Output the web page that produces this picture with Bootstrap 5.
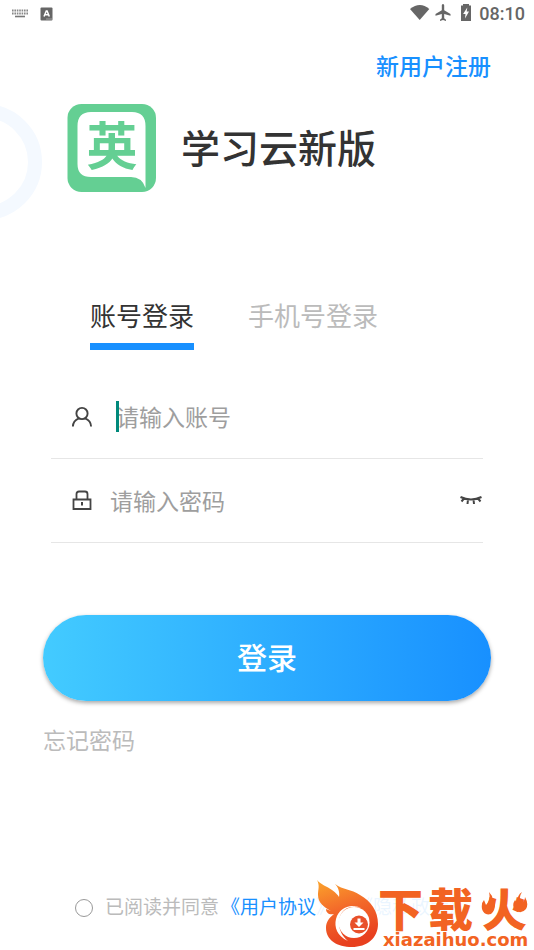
<!DOCTYPE html>
<html lang="zh-CN">
<head>
<meta charset="utf-8">
<meta name="viewport" content="width=device-width, initial-scale=1">
<title>学习云新版</title>
<link href="https://cdn.jsdelivr.net/npm/bootstrap@5.3.0/dist/css/bootstrap.min.css" rel="stylesheet">
<style>
body{font-family:Roboto,"Noto Sans CJK SC",sans-serif;background:#fff;color:#333}
a{text-decoration:none;color:#1890ff}
.screen{min-height:100vh;overflow:hidden}
.status{height:28px;padding:0 9px 0 12px;color:#666;font-size:18px;line-height:28px;font-weight:500}
.status-icons{padding-bottom:2px;margin-right:4px}
.gutter{padding-left:43px;padding-right:43px}
.register{font-size:23px;line-height:32px;font-weight:500;margin-top:24px}
.ring{position:absolute;left:-74px;top:104px;width:116px;height:116px;border:14px solid #f4f9ff;border-radius:50%}
.brand{padding:0 67px;margin-top:20px;gap:24px}
.brand h1{font-size:39px;line-height:48px;font-weight:500;padding-top:3px}
.login-tabs{padding:0 90px;margin-top:107px;gap:54px}
.login-tabs button{background:none;border:0;border-bottom:7px solid transparent;padding:0 0 7px;font-size:26px;line-height:37px;color:#bbb}
.login-tabs button.active{color:#333;border-color:#1890ff}
.fields{padding:0 51px;margin-top:25px}
.field-row{height:84px;border-bottom:1px solid #e6e6e6;padding-left:20px}
.field-row input{border:0;outline:0;padding:4px 0 0;font-size:23px;line-height:34px;background:none;min-width:0;color:#333}
.field-row input::placeholder{color:#9e9e9e;opacity:1}
.field-label{width:39px;line-height:0}
.field-label.wide{width:45px}
.caret{position:absolute;left:0;top:3px;width:3px;height:31px;background:#00897b}
.eye{border:0;background:none;padding:0;line-height:0}
.login-btn{height:86px;margin-top:72px;padding-top:2px;border:0;border-radius:43px;background:linear-gradient(90deg,#43cbff,#1890ff);box-shadow:0 2px 4px rgba(0,0,0,.35);color:#fff;font-size:30px;font-weight:500}
.forgot{font-size:23px;line-height:32px;color:#bbb;margin-top:25px}
.agree{padding-left:75px;padding-bottom:28px;font-size:19px;line-height:28px;color:#bbb;white-space:nowrap}
.agree input{appearance:none;width:18px;height:18px;border:1px solid #999;border-radius:50%;margin:0 12px 0 0;flex:none}
.agree input:checked{background:#1890ff}
.agree label{margin-right:2px}
.watermark{position:absolute;right:0;bottom:0;line-height:0;pointer-events:none}
</style>
</head>
<body>
<main class="screen position-relative d-flex flex-column">
  <header class="status d-flex align-items-center justify-content-between">
    <div class="d-flex align-items-center gap-2">
      <svg width="20" height="12" viewBox="0 0 20 12" aria-hidden="true"><path d="M0 2.500h16M0 5.500h16" stroke="#888" stroke-width="2" stroke-dasharray="1.600 .8"/><path d="M3 8.500h10" stroke="#777" stroke-width="1.600"/></svg>
      <svg width="13" height="14" viewBox="0 0 13 14" aria-hidden="true"><rect x=".5" y=".5" width="12" height="13" rx="1" fill="#666"/><path d="M4 9.500 6.300 4h.8l2.200 5.500M4.800 7.800h3.800" fill="none" stroke="#fff" stroke-width="1.500"/><path d="M6.500 12h5" stroke="#ddd" stroke-dasharray="1 1"/></svg>
    </div>
    <div class="d-flex align-items-center">
      <svg class="status-icons" width="69" height="22" viewBox="0 0 69 20" aria-hidden="true" fill="#666"><path d="M4 6Q14-2 23.300 6L13.700 17Z"/><path d="M37 1c-.8 0-1.200.8-1.200 1.600v4.600L29.500 11v1.800l6.300-1.800v4.200l-1.800 1.500V18l3-.9 3 .9v-1.300l-1.800-1.500V11l6.300 1.800V11l-6.300-3.800V2.600c0-.8-.4-1.600-1.200-1.600z"/><path d="M57 1v1.500h-2V18h10V2.500h-2V1zm4.300 3.500-.6 4h2.300L59 15.500l.5-4.500h-2.400z" fill-rule="evenodd"/></svg>
      <time>08:10</time>
    </div>
  </header>
  <div class="ring"></div>
  <div class="gutter text-end"><a class="register d-inline-block" href="#">新用户注册</a></div>
  <div class="brand d-flex align-items-center position-relative">
    <svg class="flex-shrink-0" width="90" height="88" viewBox="0 0 90 88" role="img" aria-label="英">
      <rect x=".5" width="88.500" height="88" rx="14" fill="#64cf93"/>
      <path d="M24 8H65Q78.500 8 78.500 22V84Q75 73 64 73H24Q10.500 73 10.500 60V22Q10.500 8 24 8Z" fill="#fff"/>
      <text x="45" y="61" text-anchor="middle" font-family="Noto Sans CJK SC" font-weight="700" font-size="51" fill="#64cf93">英</text>
    </svg>
    <h1 class="m-0">学习云新版</h1>
  </div>
  <nav class="login-tabs d-flex" aria-label="登录方式">
    <button type="button" class="active">账号登录</button>
    <button type="button">手机号登录</button>
  </nav>
  <form class="d-flex flex-column flex-grow-1">
    <div class="fields">
      <div class="field-row d-flex align-items-center">
        <label class="field-label wide" for="account" aria-label="账号"><svg width="22" height="22" viewBox="0 0 22 22" fill="none" stroke="#444" stroke-width="1.900"><circle cx="11" cy="7.500" r="5.600"/><path d="M1.900 20.500C2 16.500 4.800 13.500 8 12.300M14 12.300c3.300 1.200 6 4.200 6.100 8.200"/></svg></label>
        <div class="position-relative d-flex flex-grow-1"><input class="w-100" id="account" type="text" placeholder="请输入账号"><span class="caret"></span></div>
      </div>
      <div class="field-row d-flex align-items-center">
        <label class="field-label" for="password" aria-label="密码"><svg width="22" height="22" viewBox="0 0 22 22" fill="none" stroke="#444" stroke-width="1.800"><path d="M2.500 9.500h17v9.500h-17zM5.500 9V4Q5.500 1.500 8 1.500h6q2.500 0 2.500 2.500v5"/><path d="M11 12v3.500" stroke-width="2"/></svg></label>
        <input class="flex-grow-1" id="password" type="password" placeholder="请输入密码">
        <button class="eye" type="button" aria-label="显示密码"><svg width="24" height="14" viewBox="0 0 24 14" fill="none" stroke="#444" stroke-width="2"><path d="M1.500 3Q12 8 22.500 3M5 4.500 2.500 7.500M9 5.500 8.500 10M14.500 5.500l.5 4.500M19 4.500l2.500 3"/></svg></button>
      </div>
    </div>
    <div class="gutter">
      <button class="login-btn w-100" type="submit">登录</button>
      <a class="forgot d-inline-block" href="#">忘记密码</a>
    </div>
    <div class="agree d-flex align-items-center mt-auto">
      <input type="checkbox" id="agree"><label for="agree">已阅读并同意</label><a href="#">《用户协议》</a><span>、</span><a href="#">《隐私政策》</a>
    </div>
  </form>
  <div class="watermark">
    <svg width="218" height="72" viewBox="0 0 218 72" role="img" aria-label="下载火 xiazaihuo.com">
      <defs><linearGradient id="flame" x1="0" y1="0" x2=".3" y2="1"><stop stop-color="#fba52b"/><stop offset=".5" stop-color="#f3692a"/><stop offset="1" stop-color="#e8401f"/></linearGradient></defs>
      <path d="M0 0H218V72H0Z" fill="#fff" fill-opacity=".91"/>
      <path d="M1 2C5 7 11 8 16 12C20 15 22 17 23 19C24 14 22 9 19 6C27 12 35 11 44 17C55 23 62 33 62 46C62 60 51 69 36 69C21 69 10 62 10 50C10 44 13 40 18 36C13 37 10 35 10 31L15 33C8 29 2 25 2 17C2 11 4 8 1 2Z" fill="url(#flame)"/>
      <circle cx="38" cy="44.500" r="15.500" fill="#fff"/>
      <path d="M45 30C30 25 22 35 23 47C24 54 27 59 32 63C21 58 18 49 20 41C23 30 34 25 45 30Z" fill="#fff"/>
      <circle cx="43" cy="46.500" r="9" fill="#e8502a"/>
      <path d="M41.500 40.500h3v4h3l-4.500 4.500-4.500-4.500h3zM37.500 50h11v2h-11z" fill="#fff"/>
      <g font-family="Noto Sans CJK SC" font-weight="900" font-size="45" fill="#f26322"><text x="62" y="49">下</text><text x="112" y="49">载</text><text x="166" y="49">火</text></g>
      <path d="M173 14Q178 19 176 24L179 22Q180 32 175 36Q168 38 166 31Q165 25 168 22L170 27Q175 22 173 14ZM206 14Q202 20 205 25Q209 23 209 19Q213 26 210 31Q206 36 200 33Q195 28 199 22L201 25Q201 17 206 14Z" fill="#f26322"/>
      <text x="67" y="68" font-family="DejaVu Sans" font-weight="700" font-size="18" fill="#f26322">xiazaihuo.com</text>
    </svg>
  </div>
</main>
<script src="https://cdn.jsdelivr.net/npm/bootstrap@5.3.0/dist/js/bootstrap.bundle.min.js"></script>
</body>
</html>
